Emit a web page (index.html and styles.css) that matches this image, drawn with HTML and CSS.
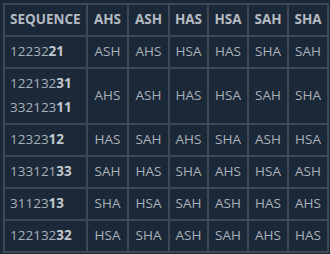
FILE: index.html
```html
<!DOCTYPE html>
<html>
<head>
<meta charset="utf-8">
<link rel="stylesheet" href="styles.css">
</head>
<body>
<table class="grid">
  <colgroup>
    <col class="c-seq"><col class="c-41"><col class="c-41"><col class="c-39"><col class="c-40"><col class="c-40"><col class="c-40">
  </colgroup>
  <thead>
    <tr><th class="seq">SEQUENCE</th><th>AHS</th><th>ASH</th><th>HAS</th><th>HSA</th><th>SAH</th><th>SHA</th></tr>
  </thead>
  <tbody>
    <tr><td class="seq">12232<b>21</b></td><td>ASH</td><td>AHS</td><td>HSA</td><td>HAS</td><td>SHA</td><td>SAH</td></tr>
    <tr><td class="seq">122132<b>31</b><br>332123<b>11</b></td><td>AHS</td><td>ASH</td><td>HAS</td><td>HSA</td><td>SAH</td><td>SHA</td></tr>
    <tr><td class="seq">12323<b>12</b></td><td>HAS</td><td>SAH</td><td>AHS</td><td>SHA</td><td>ASH</td><td>HSA</td></tr>
    <tr><td class="seq">133121<b>33</b></td><td>SAH</td><td>HAS</td><td>SHA</td><td>AHS</td><td>HSA</td><td>ASH</td></tr>
    <tr><td class="seq">31123<b>13</b></td><td>SHA</td><td>HSA</td><td>SAH</td><td>ASH</td><td>HAS</td><td>AHS</td></tr>
    <tr><td class="seq">122132<b>32</b></td><td>HSA</td><td>SHA</td><td>ASH</td><td>SAH</td><td>AHS</td><td>HAS</td></tr>
  </tbody>
</table>
</body>
</html>
```
FILE: styles.css
```css
html, body {
  margin: 0;
  padding: 0;
  background: #1b2838;
}
body {
  padding: 3px;
  font-family: "Open Sans", "Noto Sans", sans-serif;
  font-size: 13.5px;
  color: #aab1b8;
}
.grid {
  border-collapse: collapse;
  table-layout: fixed;
  width: 324px;
  border: 2px solid #3f4754;
}
.c-seq { width: 83px; }
.c-41 { width: 41px; }
.c-39 { width: 39px; }
.c-40 { width: 40px; }
.grid th, .grid td {
  border: 2px solid #3f4754;
  padding: 3px 0 3.5px;
  line-height: 23.5px;
  white-space: nowrap;
  text-align: center;
  overflow: hidden;
}
.grid th {
  font-weight: 700;
  color: #b3bac1;
}
.grid .seq {
  text-align: left;
  padding-left: 5px;
}
.grid b {
  font-weight: 700;
  color: #c0c6cc;
}
```
